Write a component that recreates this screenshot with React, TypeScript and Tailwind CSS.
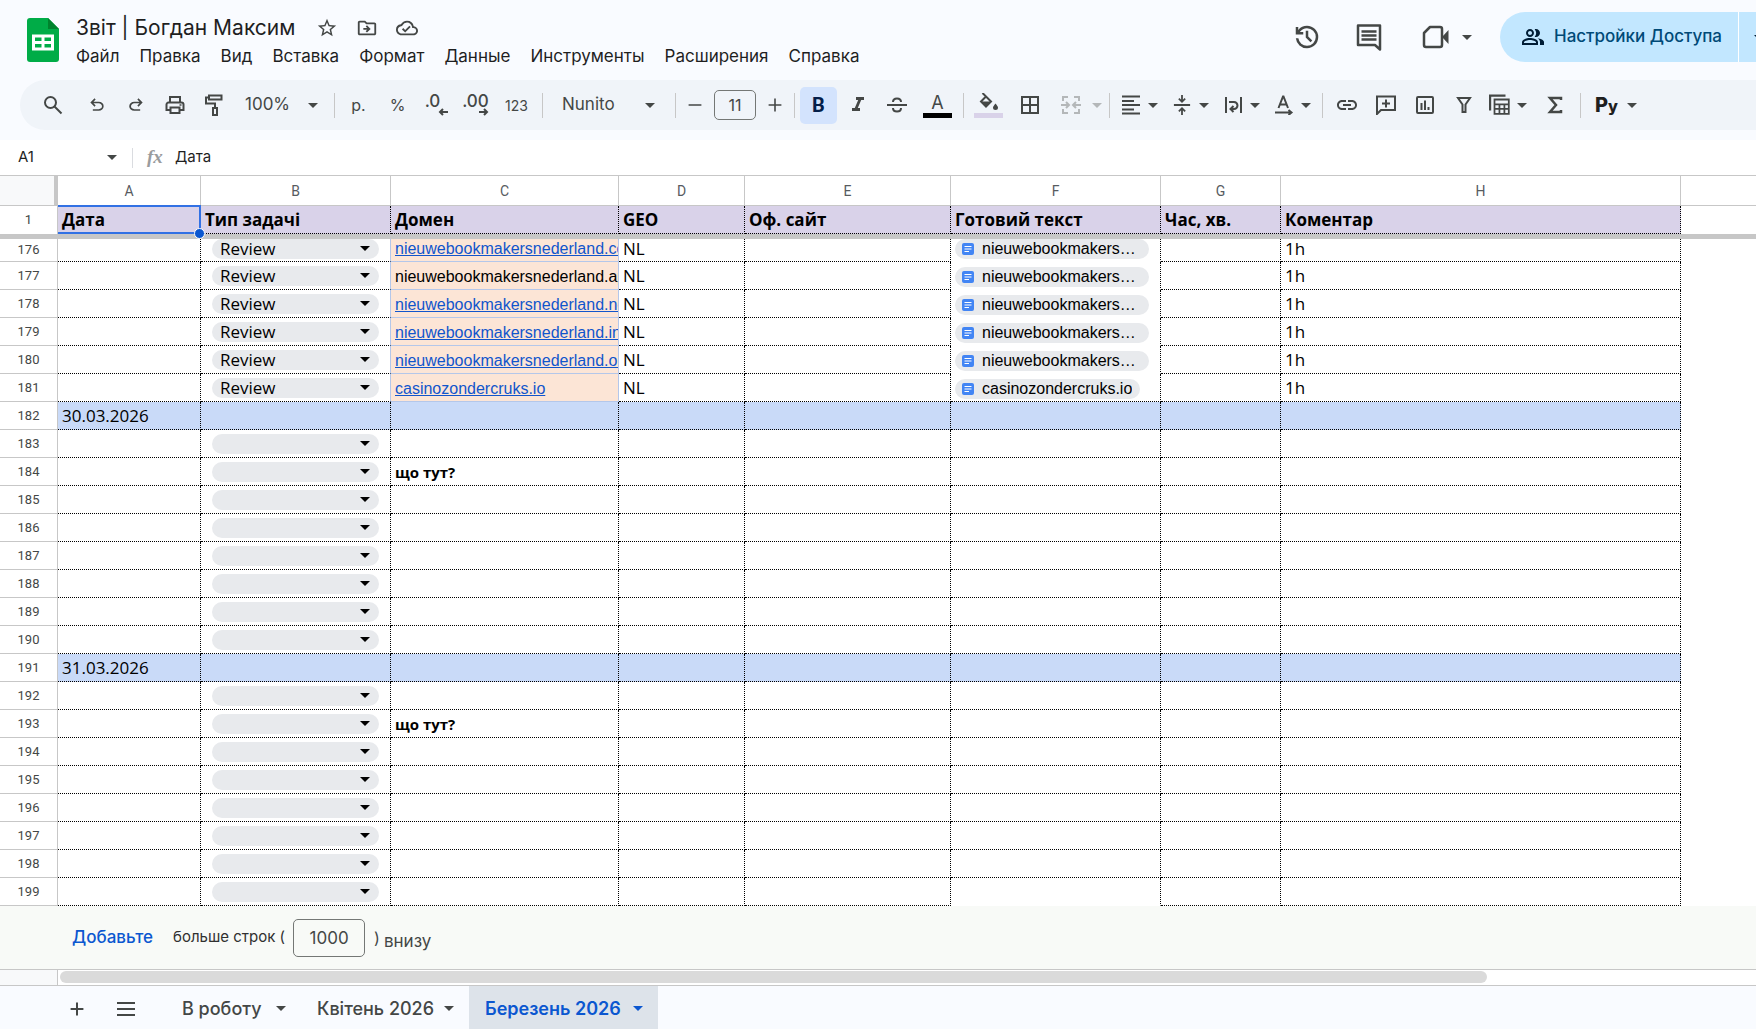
import type { ReactNode } from 'react';
import { MdFormatItalic, MdLink, MdOutlineCloudDone, MdOutlineDriveFileMove, MdOutlinePeopleAlt, MdStarBorder } from 'react-icons/md';

type RowKind = 'review' | 'date' | 'empty';

interface SheetRow {
  num: number;
  kind: RowKind;
  date?: string;
  domain?: string;
  plainDomain?: boolean;
  doc?: string;
  note?: string;
}

const menuItems = ['Файл', 'Правка', 'Вид', 'Вставка', 'Формат', 'Данные', 'Инструменты', 'Расширения', 'Справка'];
const columns = ['A', 'B', 'C', 'D', 'E', 'F', 'G', 'H'];
const headers = ['Дата', 'Тип задачі', 'Домен', 'GEO', 'Оф. сайт', 'Готовий текст', 'Час, хв.', 'Коментар'];

const reviewRows: SheetRow[] = [
  { num: 176, kind: 'review', domain: 'nieuwebookmakersnederland.com', doc: 'nieuwebookmakersnederland.com' },
  { num: 177, kind: 'review', domain: 'nieuwebookmakersnederland.app', doc: 'nieuwebookmakersnederland.app', plainDomain: true },
  { num: 178, kind: 'review', domain: 'nieuwebookmakersnederland.net', doc: 'nieuwebookmakersnederland.net' },
  { num: 179, kind: 'review', domain: 'nieuwebookmakersnederland.info', doc: 'nieuwebookmakersnederland.info' },
  { num: 180, kind: 'review', domain: 'nieuwebookmakersnederland.org', doc: 'nieuwebookmakersnederland.org' },
  { num: 181, kind: 'review', domain: 'casinozondercruks.io', doc: 'casinozondercruks.io' },
];

function emptyRows(from: number, to: number): SheetRow[] {
  return Array.from({ length: to - from + 1 }, (_, i) => ({
    num: from + i,
    kind: 'empty' as const,
    note: i === 1 ? 'що тут?' : undefined,
  }));
}

const rows: SheetRow[] = [
  ...reviewRows,
  { num: 182, kind: 'date', date: '30.03.2026' },
  ...emptyRows(183, 190),
  { num: 191, kind: 'date', date: '31.03.2026' },
  ...emptyRows(192, 199),
];

function Caret({ className = '' }: { className?: string }) {
  return (
    <svg viewBox="0 0 10 5" className={`h-[5px] w-[10px] shrink-0 ${className}`} fill="currentColor" aria-hidden="true">
      <path d="M0 0h10L5 5z" />
    </svg>
  );
}

// 960-unit symbol grid
function Sym({ d, className = 'h-5 w-5' }: { d: string; className?: string }) {
  return (
    <svg viewBox="0 -960 960 960" className={className} fill="currentColor" aria-hidden="true">
      <path d={d} />
    </svg>
  );
}

// 20-unit stroked icons
function Line({ children, className = 'h-5 w-5', w = 2 }: { children: ReactNode; className?: string; w?: number }) {
  return (
    <svg viewBox="0 0 20 20" className={className} fill="none" stroke="currentColor" strokeWidth={w} aria-hidden="true">
      {children}
    </svg>
  );
}

function Tool({ label, className = 'w-[39px]', children }: { label: string; className?: string; children: ReactNode }) {
  return (
    <button aria-label={label} className={`flex h-9 shrink-0 items-center justify-center ${className}`}>
      {children}
    </button>
  );
}

function MenuTool({ label, children }: { label: string; children: ReactNode }) {
  return (
    <button aria-label={label} className="flex h-9 w-[51px] shrink-0 items-center">
      <span className="flex w-[34px] justify-center">{children}</span>
      <Caret />
    </button>
  );
}

function Sep() {
  return <div className="mx-1 h-[25px] w-px shrink-0 bg-[#c7c7c7]" />;
}

function TitleBar() {
  return (
    <header className="flex h-20 items-start justify-between">
      <div className="flex">
        <svg viewBox="0 0 32 44" className="mt-[18px] ml-[27px] h-[44px] w-8" aria-label="Таблицы">
          <path d="M3 0h18l11 11v30a3 3 0 0 1-3 3H3a3 3 0 0 1-3-3V3a3 3 0 0 1 3-3z" fill="#00ac47" />
          <path d="M21 0l11 11H21z" fill="#00832d" />
          <path d="M5 16.500h22v16H5zM8 19.500v3.500h6.500v-3.500zM17.500 19.500v3.500H24v-3.500zM8 26v3.500h6.500V26zM17.500 26v3.500H24V26z" fill="#fff" fillRule="evenodd" />
        </svg>
        <div className="ml-[17px] pt-3">
          <div className="flex h-8 items-center text-[#444746]">
            <h1 className="text-[21px] leading-8 whitespace-nowrap text-[#1f1f1f]">Звіт | Богдан Максим</h1>
            <div className="ml-[21px] flex gap-[18px]">
              <button aria-label="Пометить"><MdStarBorder className="h-[22px] w-[22px]" /></button>
              <button aria-label="Переместить"><MdOutlineDriveFileMove className="h-[22px] w-[22px]" /></button>
              <button aria-label="Состояние документа"><MdOutlineCloudDone className="h-[22px] w-[22px]" /></button>
            </div>
          </div>
          <nav className="flex h-6 gap-5 text-[17px] leading-6 text-[#1f1f1f]">
            {menuItems.map((item) => (
              <button key={item}>{item}</button>
            ))}
          </nav>
        </div>
      </div>

      <div className="mt-3 flex h-[50px] shrink-0 items-center text-[#444746]">
        <button aria-label="История изменений">
          <Sym className="h-[30px] w-[30px]" d="M480-120q-138 0-240.500-91.500T122-440h82q14 104 92.500 172T480-200q117 0 198.500-81.500T760-480q0-117-81.500-198.500T480-760q-69 0-129 32t-101 88h110v80H120v-240h80v94q51-64 124.500-99T480-840q75 0 140.500 28.500t114 77q48.500 48.500 77 114T840-480q0 75-28.500 140.500t-77 114q-48.500 48.500-114 77T480-120Zm112-192L440-464v-216h80v184l128 128-56 56Z" />
        </button>
        <button aria-label="Комментарии" className="ml-8">
          <svg viewBox="0 0 30 30" className="h-[30px] w-[30px]" aria-hidden="true">
            <path d="M4 3.500h22v24l-5-4.500H4z" fill="none" stroke="currentColor" strokeWidth="2.500" strokeLinejoin="round" />
            <path d="M7.500 9.500h15M7.500 13.500h15M7.500 17.500h15" stroke="currentColor" strokeWidth="2.500" />
          </svg>
        </button>
        <button aria-label="Видеовстреча" className="ml-[37px] flex items-center">
          <svg viewBox="0 0 30 30" className="h-[30px] w-[30px]" aria-hidden="true">
            <path d="M9 5h10a2 2 0 0 1 2 2v16a2 2 0 0 1-2 2H5a2 2 0 0 1-2-2V11z" fill="none" stroke="currentColor" strokeWidth="2.500" strokeLinejoin="round" />
            <path d="M21 15l6.500-7v14z" fill="currentColor" />
          </svg>
          <Caret className="ml-[11px]" />
        </button>
        <div className="ml-7 flex h-[50px] w-64 overflow-hidden rounded-l-full bg-[#c2e7ff]">
          <button className="flex w-[239px] shrink-0 items-center gap-[9px] border-r border-white pl-[21px] text-[#004a77]">
            <MdOutlinePeopleAlt className="h-6 w-6 shrink-0 text-[#001d35]" />
            <span className="text-[17px] font-medium whitespace-nowrap">Настройки Доступа</span>
          </button>
          <button aria-label="Варианты доступа" className="flex shrink-0 items-center pl-[15px] text-[#001d35]">
            <Caret />
          </button>
        </div>
      </div>
    </header>
  );
}

function Toolbar() {
  return (
    <div className="ml-5 flex h-[50px] items-center overflow-hidden rounded-l-full bg-[#f0f4f9] pl-[9px] text-[#444746]">
      <Tool label="Поиск" className="w-12">
        <Line><circle cx="7.500" cy="7.500" r="5.500" /><path d="M11.500 11.500l7 7" /></Line>
      </Tool>
      <Tool label="Отменить"><Sym d="M280-200v-80h284q63 0 109.500-40T720-420q0-60-46.500-100T564-560H312l104 104-56 56-200-200 200-200 56 56-104 104h252q97 0 169.500 63T800-420q0 94-72.500 157T564-200H280Z" /></Tool>
      <Tool label="Повторить"><Sym d="M396-200q-97 0-169.500-63T154-420q0-94 72.500-157T396-640h252L544-744l56-56 200 200-200 200-56-56 104-104H396q-63 0-109.500 40T240-420q0 60 46.500 100T396-280h284v80H396Z" /></Tool>
      <Tool label="Печать">
        <Line><path d="M5 7V2h10v5M5 15H1.500V9.500a2 2 0 0 1 2-2h13a2 2 0 0 1 2 2V15H15" /><path d="M5.500 12.500h9V18h-9z" /><path d="M14.500 10h2" strokeWidth="1.500" /></Line>
      </Tool>
      <Tool label="Копировать форматирование">
        <Line className="h-6 w-5"><path d="M5 0.500h12.500v4H5zM5 2.500H2v6h9v4" /><path d="M9 13h4v7H9z" /></Line>
      </Tool>
      <label className="flex w-[97px] shrink-0 items-center pl-3">
        <select aria-label="Масштаб" className="w-[63px] appearance-none text-[17px]"><option>100%</option></select>
        <Caret />
      </label>
      <Sep />
      <Tool label="Денежный формат"><span className="text-[16px]">р.</span></Tool>
      <Tool label="Процентный формат"><span className="text-[16px]">%</span></Tool>
      <Tool label="Уменьшить число знаков">
        <span className="flex flex-col items-end pr-2 text-[17px] leading-[14px] font-medium">
          .0
          <svg viewBox="0 0 10 8" className="-mr-2 h-2 w-[10px]" fill="none" stroke="currentColor" strokeWidth="2"><path d="M10 4H2M5 1L2 4l3 3" /></svg>
        </span>
      </Tool>
      <Tool label="Увеличить число знаков">
        <span className="flex flex-col items-end text-[17px] leading-[14px] font-medium">
          .00
          <svg viewBox="0 0 10 8" className="h-2 w-[10px]" fill="none" stroke="currentColor" strokeWidth="2"><path d="M0 4h8M5 1l3 3-3 3" /></svg>
        </span>
      </Tool>
      <Tool label="Другие форматы" className="w-[43px]"><span className="text-[14px]">123</span></Tool>
      <Sep />
      <label className="flex w-[124px] shrink-0 items-center pl-[15px]">
        <select aria-label="Шрифт" className="w-[83px] appearance-none text-[17px]"><option>Nunito</option></select>
        <Caret />
      </label>
      <Sep />
      <Tool label="Уменьшить размер" className="w-[30px]"><Line className="h-4 w-4"><path d="M2 10h16" /></Line></Tool>
      <input aria-label="Размер шрифта" defaultValue="11" className="mx-1 h-[30px] w-[42px] shrink-0 rounded-[5px] border border-[#747775] text-center text-[16px]" />
      <Tool label="Увеличить размер" className="w-[30px]"><Line className="h-4 w-4"><path d="M2 10h16M10 2v16" /></Line></Tool>
      <Sep />
      <Tool label="Полужирный">
        <span className="flex h-[37px] w-[37px] shrink-0 items-center justify-center rounded-[5px] bg-[#d3e3fd] font-['Roboto'] text-[20px] font-bold text-[#041e49]">B</span>
      </Tool>
      <Tool label="Курсив"><MdFormatItalic className="h-6 w-6" /></Tool>
      <Tool label="Зачеркнутый">
        <Line><path d="M0 10h20" /><path d="M6 7c0-2.500 2-3.500 4-3.500s4 1 4 3.500M6 13c0 2.500 2 3.500 4 3.500s4-1 4-3.500" /></Line>
      </Tool>
      <Tool label="Цвет текста" className="w-[43px]">
        <span className="flex flex-col items-center text-[18px] leading-5">A<span className="h-[5px] w-[29px] bg-black" /></span>
      </Tool>
      <Sep />
      <Tool label="Цвет заливки" className="w-[41px]">
        <span className="flex flex-col items-center">
          <svg viewBox="0 0 20 20" className="h-5 w-5" aria-hidden="true">
            <path d="M3.500 0L12 8.500 7 13.500 2 8.500l4.500-4.500" fill="none" stroke="currentColor" strokeWidth="2" />
            <path d="M2 8.500h10l-5 5z" fill="currentColor" />
            <path d="M16.500 10.500c1.500 2 2.500 3 2.500 4a2.500 2.500 0 0 1-5 0c0-1 1-2 2.500-4z" fill="currentColor" />
          </svg>
          <span className="h-[5px] w-[29px] bg-[#d9d2e9]" />
        </span>
      </Tool>
      <Tool label="Границы" className="w-[42px]"><Line><path d="M2 2h16v16H2zM10 2v16M2 10h16" /></Line></Tool>
      <button aria-label="Объединить ячейки" disabled className="flex h-9 w-[54px] shrink-0 items-center text-[#b4b7b9]">
        <span className="flex w-[39px] justify-center">
          <Line><path d="M7 2H2v4M13 2h5v4M7 18H2v-4M13 18h5v-4M0 10h7M5 7l3 3-3 3M20 10h-7M15 7l-3 3 3 3" /></Line>
        </span>
        <Caret className="ml-[2px]" />
      </button>
      <Sep />
      <MenuTool label="Горизонтальное выравнивание"><Line><path d="M1 1.500h18M1 6h12M1 10h18M1 14.500h12M1 18.500h18" /></Line></MenuTool>
      <MenuTool label="Вертикальное выравнивание">
        <Line className="h-[22px] w-[18px]"><path d="M1 10h18M10-1v7M6.500 3L10 6.500 13.500 3M10 21v-7M6.500 17l3.500-3.500 3.500 3.500" /></Line>
      </MenuTool>
      <MenuTool label="Перенос текста">
        <Line><path d="M3 2v16M18 2v16M6 7h5a3 3 0 0 1 0 7H8M10.500 11L7.500 14l3 3" /></Line>
      </MenuTool>
      <MenuTool label="Поворот текста">
        <Line><path d="M4.500 13L9 1.500h.5L14 13M6 9.500h7M1 17.500h16M14.500 15l3 2.500-3 2.500" /></Line>
      </MenuTool>
      <Sep />
      <Tool label="Вставить ссылку"><MdLink className="h-6 w-6" /></Tool>
      <Tool label="Добавить комментарий"><Line><path d="M1 19V1.500h18V15H5zM10 4.500v8M6 8.500h8" /></Line></Tool>
      <Tool label="Вставить диаграмму"><Line><rect x="2" y="2" width="16" height="16" rx="1" /><path d="M6.500 8v7M10 5.500V15M13.500 12v3" /></Line></Tool>
      <Tool label="Создать фильтр"><Line><path d="M4 3h12l-4.500 6.500V17h-3V9.500z" /></Line></Tool>
      <MenuTool label="Представления таблицы">
        <Line className="h-[22px] w-[22px]"><path d="M1 15V1.500h14" /><path d="M5 5h13v13H5zM5 9.500h13M5 13.500h13M9.500 9.500V18M14 9.500V18" strokeWidth="1.600" /></Line>
      </MenuTool>
      <Tool label="Функции" className="w-[42px]"><Line><path d="M16 5V3H5l6 7-6 7h11v-2" strokeWidth="2.500" /></Line></Tool>
      <Sep />
      <button aria-label="Python" className="flex h-9 shrink-0 items-center gap-[9px] pl-[10px] text-[20px] font-extrabold text-[#1f1f1f]">
        <span>P<span className="text-[16px]">y</span></span>
        <Caret className="text-[#444746]" />
      </button>
    </div>
  );
}

function FormulaBar() {
  return (
    <div className="flex h-[35px] items-center bg-white text-[#1f1f1f]">
      <input aria-label="Поле имени" defaultValue="A1" className="ml-[18px] w-[89px] text-[15px]" />
      <Caret className="text-[#444746]" />
      <div className="ml-[15px] h-5 w-px bg-[#dadce0]" />
      <span className="ml-[14px] w-[28px] font-['Liberation_Serif'] text-[19px] font-bold text-[#9a9c9e] italic">fx</span>
      <input aria-label="Формула" defaultValue="Дата" className="flex-1 text-[15px]" />
    </div>
  );
}

function TypeChip({ value }: { value: string }) {
  return (
    <label className="relative ml-[11px] block h-5 w-[167px]">
      <select aria-label="Тип задачі" defaultValue={value} className="block h-5 w-full appearance-none rounded-full bg-[#e8eaed] pl-2 text-[17px] leading-5 text-black">
        <option>{value}</option>
      </select>
      <Caret className="pointer-events-none absolute top-[7px] right-[9px]" />
    </label>
  );
}

function DocChip({ name }: { name: string }) {
  return (
    <a href="#doc" className="ml-1 inline-flex h-5 max-w-[194px] items-center rounded-full bg-[#e8eaed] pr-2 pl-[7px] align-bottom">
      <svg viewBox="0 0 12 12" className="mr-2 h-3 w-3 shrink-0" aria-hidden="true">
        <rect width="12" height="12" rx="2" fill="#4285f4" />
        <path d="M2.500 3.500h7M2.500 6h7M2.500 8.500h4.500" stroke="#fff" strokeWidth="1.200" />
      </svg>
      <span className="truncate font-['Liberation_Sans'] text-[16px] leading-5 text-black">{name}</span>
    </a>
  );
}

function Row({ row }: { row: SheetRow }) {
  const review = row.kind === 'review';
  const bg = row.kind === 'date' ? 'bg-[#c9daf8]' : 'bg-white';
  // the first scrolled row slides partly under the frozen divider
  const clipped = row.num === 176;
  const pad = clipped ? 'pb-[2px]' : 'pb-[3px]';
  const cell = `p-0 align-bottom border-r border-b border-dotted border-black overflow-hidden whitespace-nowrap ${bg}`;
  const noBottom = (review && row.num !== 181) || row.num === 199 ? 'border-b-white' : '';

  return (
    <tr className={clipped ? 'h-[23px]' : 'h-7'}>
      <th scope="row" className="border-r border-b border-[#c7c7c7] bg-white p-0 align-middle font-['Roboto'] text-[13px] leading-4 font-normal text-[#444746]">{row.num}</th>
      <td className={`${cell} ${pad} pl-1`}>{row.date}</td>
      <td className={review ? `border-r border-b border-r-[#b4c7ea] border-b-black bg-white p-0 align-bottom [border-bottom-style:dotted] ${pad}` : `${cell} ${pad}`}>
        {row.kind !== 'date' && <TypeChip value={review ? 'Review' : ''} />}
      </td>
      <td className={review ? 'overflow-hidden border-r border-b border-[#b4c7ea] bg-[#fce5d6] p-0 pb-[2px] pl-1 align-bottom whitespace-nowrap' : `${cell} ${pad} pl-1`}>
        {row.domain && (
          <div className="overflow-hidden font-['Liberation_Sans'] text-[16px] leading-5">
            {row.plainDomain ? row.domain : <a href="#site" className="text-[#1155cc] underline">{row.domain}</a>}
          </div>
        )}
        {row.note && <b className="block text-[15px] leading-5">{row.note}</b>}
      </td>
      <td className={`${cell} ${pad} pl-1`}>{review && 'NL'}</td>
      <td className={cell} />
      <td className={`${cell} ${noBottom} pb-[2px]`}>{row.doc && <DocChip name={row.doc} />}</td>
      <td className={cell} />
      <td className={`${cell} ${pad} pl-1`}>{review && '1h'}</td>
      <td className="bg-white p-0" />
    </tr>
  );
}

function Grid() {
  return (
    <table className="w-full table-fixed border-separate border-spacing-0 border-t border-[#c7c7c7] bg-white font-['Open_Sans'] text-[17px] leading-5 text-black">
      <colgroup>
        <col className="w-[58px]" />
        <col className="w-[143px]" />
        <col className="w-[190px]" />
        <col className="w-[228px]" />
        <col className="w-[126px]" />
        <col className="w-[206px]" />
        <col className="w-[210px]" />
        <col className="w-[120px]" />
        <col className="w-[400px]" />
        <col />
      </colgroup>
      <thead>
        <tr className="h-[30px]">
          <td className="border-r-4 border-b border-r-[#c7c7c7] border-b-[#c7c7c7] bg-[#f8f9fa] p-0" />
          {columns.map((c) => (
            <th key={c} scope="col" className="border-r border-b border-[#c7c7c7] p-0 text-center font-['Roboto'] text-[14px] font-normal text-[#575b5f]">{c}</th>
          ))}
          <td className="border-b border-[#c7c7c7] p-0" />
        </tr>
        <tr className="h-7">
          <th scope="row" className="border-r border-[#c7c7c7] p-0 font-['Roboto'] text-[13px] font-normal text-[#444746]">1</th>
          {headers.map((h, i) => (
            <th key={h} scope="col" className="relative border-r border-b border-dotted border-black bg-[#d9d2e9] p-0 pl-1 text-left align-middle text-[17px] leading-6 font-bold whitespace-nowrap">
              {h}
              {i === 0 && (
                <span className="absolute -top-px -right-px -bottom-px left-0 z-10 border-2 border-l-0 border-[#3271e4]">
                  <span className="absolute -right-[6px] -bottom-[7px] h-[11px] w-[11px] rounded-full border border-white bg-[#0b57d0]" />
                </span>
              )}
            </th>
          ))}
          <td className="p-0" />
        </tr>
        <tr className="h-[5px]">
          <td colSpan={10} className="bg-[#c7c7c7] p-0" />
        </tr>
      </thead>
      <tbody>
        {rows.map((row) => (
          <Row key={row.num} row={row} />
        ))}
      </tbody>
    </table>
  );
}

function AddRows() {
  return (
    <div className="flex h-[63px] items-center bg-[#f8faf7] pl-[72px] text-[#444746]">
      <button className="text-[17px] font-medium text-[#0b57d0]">Добавьте</button>
      <label className="ml-5 flex items-center gap-2 text-[15px] text-[#303030]">
        больше строк (
        <input defaultValue="1000" className="h-[38px] w-[72px] rounded-[5px] border border-[#747775] text-center text-[17px] text-[#444746]" />
      </label>
      <span className="ml-[9px] text-[16px]">)</span>
      <span className="mt-2 ml-1 text-[17px]">внизу</span>
    </div>
  );
}

function SheetTabs() {
  return (
    <footer className="flex min-h-[44px] flex-1 border-t border-[#c7c7c7] text-[18px] font-medium text-[#444746]">
      <button aria-label="Добавить лист" className="ml-[57px] flex w-10 items-center justify-center pt-[2px]">
        <Line className="h-4 w-4"><path d="M2 10h16M10 2v16" strokeWidth="2.500" /></Line>
      </button>
      <button aria-label="Все листы" className="ml-[9px] flex w-10 items-center justify-center pt-[2px]">
        <Line><path d="M1 4h18M1 10h18M1 16h18" /></Line>
      </button>
      <button className="ml-5 flex w-[135px] items-center justify-between pt-[2px] pr-[15px] pl-4 whitespace-nowrap">В роботу<Caret /></button>
      <button className="flex w-[168px] items-center justify-between pt-[2px] pr-[15px] pl-4 whitespace-nowrap">Квітень 2026<Caret /></button>
      <button className="flex w-[189px] items-center justify-between bg-[#dde3ea] pt-[2px] pr-[15px] pl-4 font-semibold whitespace-nowrap text-[#0b57d0]">Березень 2026<Caret /></button>
    </footer>
  );
}

export default function App() {
  return (
    <div className="flex min-h-screen flex-col overflow-hidden bg-[#f9fbff] font-['Inter',sans-serif]">
      <TitleBar />
      <Toolbar />
      <div className="h-[10px]" />
      <FormulaBar />
      <Grid />
      <AddRows />
      <div className="flex h-4 border-t border-[#c7c7c7] bg-white">
        <div className="w-[58px] shrink-0 border-r border-[#c7c7c7] bg-[#f8f9fa]" />
        <div className="flex-1 pt-px pr-[269px] pl-[2px]">
          <div className="h-3 rounded-full bg-[#dadada]" />
        </div>
      </div>
      <SheetTabs />
    </div>
  );
}
